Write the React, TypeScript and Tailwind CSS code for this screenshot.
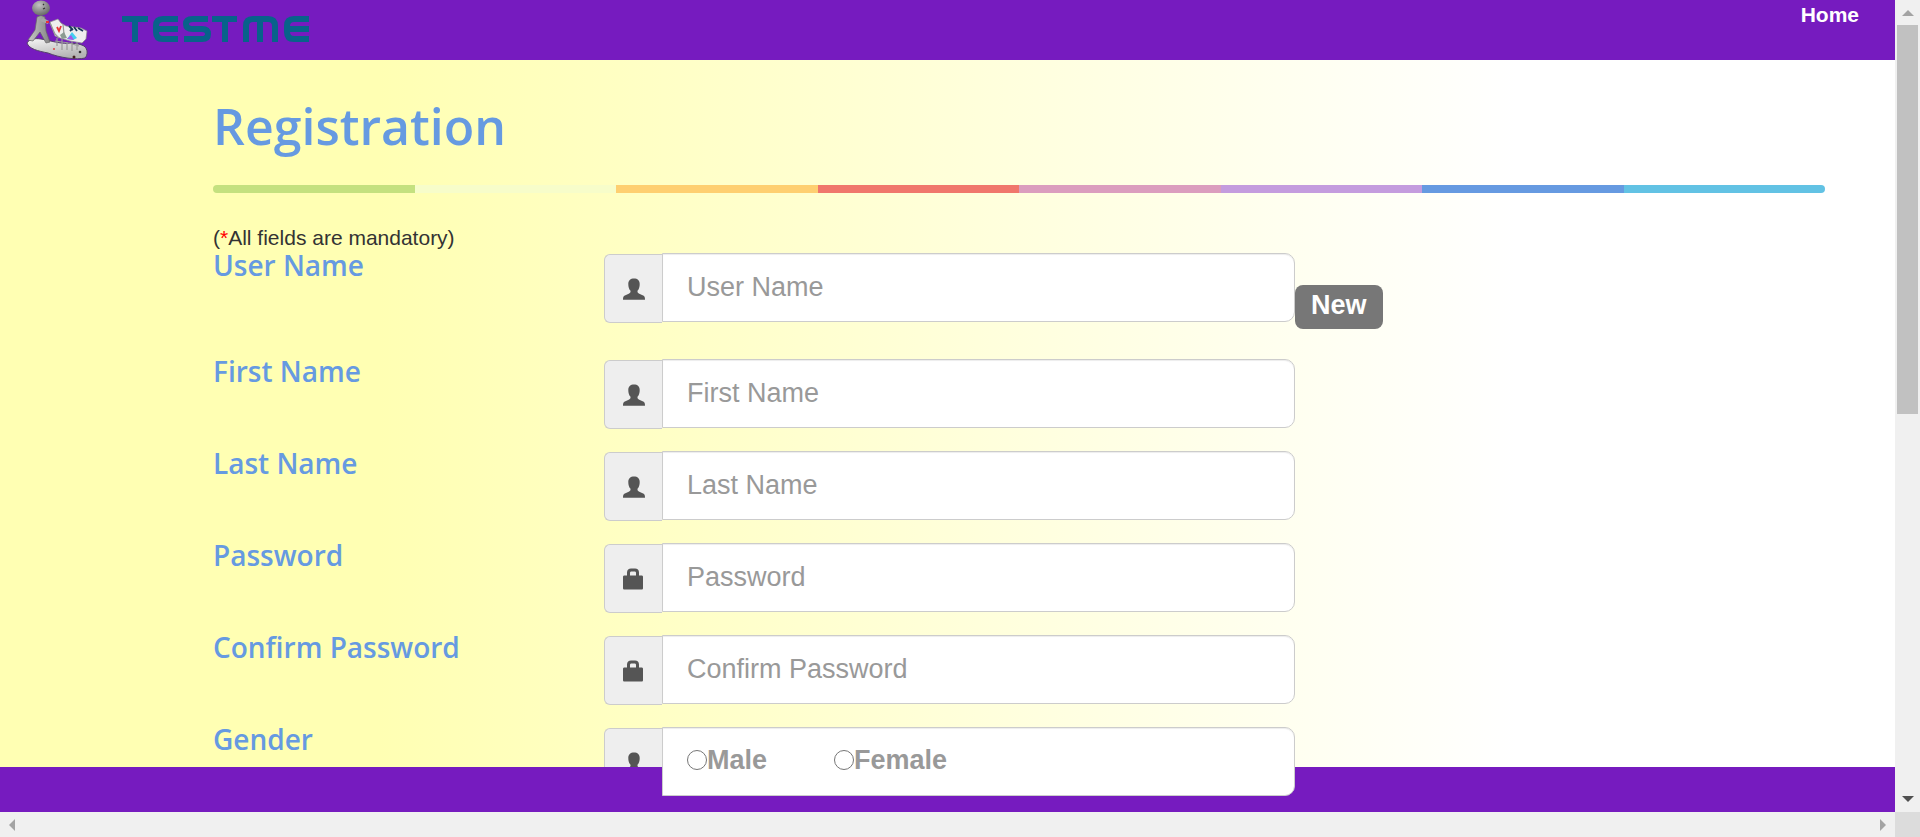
import type { ReactNode } from "react";

const stripes = ["bg-[#c4e17f]", "bg-[#f7fdca]", "bg-[#fecf71]", "bg-[#f0776c]", "bg-[#db9dbe]", "bg-[#c49cde]", "bg-[#669ae1]", "bg-[#62c2e4]"];

function UserIcon() {
  return (
    <svg width="22" height="22" viewBox="0 0 22 22" fill="#555" aria-hidden="true">
      <path d="M11 .5c3.600 0 5.700 2 5.700 5.500 0 3-.6 5-2.200 6.800v1c0 .8.6 1.300 1.800 1.900l3.800 1.700c1.500.7 1.900 1.600 1.900 4.300H0c0-2.700.4-3.600 1.900-4.300l3.800-1.700c1.200-.6 1.800-1.100 1.800-1.900v-1C5.900 11 5.300 9 5.300 6 5.300 2.500 7.400.5 11 .5Z" />
    </svg>
  );
}

function LockIcon() {
  return (
    <svg width="22" height="22" viewBox="0 0 22 22" fill="#555" aria-hidden="true">
      <path fillRule="evenodd" d="M4 7.500V4.500C4 2 5.800.5 8 .5h4c2.500 0 4 1.500 4 4v3h2.500c1 0 1.500.5 1.500 1.500v11c0 1-.5 1.500-1.500 1.500h-17C.5 21.500 0 21 0 20V9c0-1 .5-1.500 1.500-1.500H4Zm3 0h6V5c0-1-.5-1.500-1.500-1.500h-3C7.500 3.500 7 4 7 5v2.500Z" />
    </svg>
  );
}

function Logo() {
  return (
    <svg width="64" height="60" viewBox="0 0 64 60" aria-hidden="true">
      <defs>
        <radialGradient id="head" cx="0.4" cy="0.3" r="0.8"><stop offset="0" stopColor="#c4c4c4" /><stop offset="1" stopColor="#5c5c5c" /></radialGradient>
        <linearGradient id="body" x1="0" y1="0" x2="1" y2="0"><stop offset="0" stopColor="#c8c8c8" /><stop offset="1" stopColor="#858585" /></linearGradient>
        <linearGradient id="base" x1="0" y1="0" x2="0.4" y2="1"><stop offset="0" stopColor="#f6f6f6" /><stop offset="1" stopColor="#b4b4b4" /></linearGradient>
      </defs>
      <path d="M1 43C3 39 9 38 15 39c7 1 12 3 20 4 9 1 15-1 23 3 4 3 4 9 1 12-8 2-25 0-37-5C12 51 3 49 1 43Z" fill="url(#base)" stroke="#55406b" strokeWidth="1" />
      <path d="M11 17q4-3 8 0l1 14 4 11-4 1-6-11-7 9-5-1 7-10Z" fill="url(#body)" stroke="#666" strokeWidth="0.700" />
      <path d="m17 18 6 3-1 3-8-3Z" fill="#a6a6a6" />
      <ellipse cx="15" cy="8" rx="9" ry="7.500" fill="url(#head)" />
      <path d="m17 4 1 1m-1 4 2-1" stroke="#333" strokeWidth="1.200" />
      <path d="m24 22 8-3 3 4 5 3 15 2 6 3-1 8-4 4-12-2-10-3-5-2Z" fill="#eee" stroke="#888" strokeWidth="0.700" />
      <path d="m24 23 5 11 4 4M37 24l1 10m-7 4v8m5-8v12m5-8v8m5-9v10m5-9v8M29 41l14 2 10 3" stroke="#999" strokeWidth="1.200" fill="none" />
      <path d="m31 27 2 4 2-5M20 22h3" stroke="#e83434" strokeWidth="1.800" fill="none" />
      <path d="m43 26 4 4m1-3 3 4m1-3 5 3M44 31l2-2" stroke="#17365a" strokeWidth="1.800" />
      <path d="m34 35 4-3 3 6-5 1Z" fill="#8b9b92" />
      <path d="m41 39 5-7 5 6-4 2Z" fill="#42cef0" /><path d="m41 39 4-4 3 5Z" fill="#a957e6" />
      <circle cx="54" cy="52" r="1.300" fill="#333" /><circle cx="48" cy="57" r="1.500" fill="#422" /><circle cx="28" cy="49" r="1" fill="#d44" />
    </svg>
  );
}

function Wordmark() {
  return (
    <svg width="187" height="26" viewBox="0 0 187 26" fill="none" stroke="#08628a" strokeWidth="6" role="img" aria-label="TESTME">
      <path d="M0 3h26M13 3v23" />
      <path d="M56 3H41q-7 0-7 7v6q0 7 7 7h15M34 13h22" />
      <path d="M86 3H71q-7 0-7 5t7 5h9q6 0 6 5t-6 5H62" />
      <path d="M90 3h25M103 3v23" />
      <path d="M124 26V10q0-7 7-7h15q7 0 7 7v16M138 3v23" />
      <path d="M187 3h-15q-7 0-7 7v6q0 7 7 7h15M165 13h22" />
    </svg>
  );
}

type RowProps = { label: string; htmlFor?: string; icon: ReactNode; badge?: string; tall?: boolean; children: ReactNode };

function Row({ label, htmlFor, icon, badge, tall, children }: RowProps) {
  const labelClass = "text-[28px] leading-[24px] font-semibold text-[#669ae1] [font-family:'Trebuchet_MS','Open_Sans',sans-serif]";
  return (
    <div className={`grid grid-cols-[391fr_691fr_530fr] items-start ${tall ? "h-[106px]" : "h-[92px]"} shrink-0`}>
      {htmlFor ? <label htmlFor={htmlFor} className={labelClass}>{label}</label> : <span id="gender-label" className={labelClass}>{label}</span>}
      <div className="flex">
        <span className="mt-px flex h-[69px] w-[58px] shrink-0 items-center justify-center rounded-l-md border border-r-0 border-[#ccc] bg-[#eee]">{icon}</span>
        {children}
      </div>
      {badge && <span className="mt-8 justify-self-start rounded-lg bg-[#777] px-4 pt-1 pb-2 text-[27px] leading-[32px] font-bold text-white">{badge}</span>}
    </div>
  );
}

const fieldClass = "h-[69px] min-w-0 flex-1 rounded-r-[10px] border border-[#ccc] bg-white px-6 text-[27px] text-[#555] shadow-[inset_0_1px_1px_rgba(0,0,0,0.075)] outline-none placeholder:text-[#999]";

const radioClass = "size-5 appearance-none rounded-full border border-[#767676] bg-white checked:bg-[#767676]";

export default function App() {
  return (
    <div className="grid h-screen grid-cols-[1fr_25px] grid-rows-[1fr_25px] overflow-hidden bg-[#f0f0f0] [font-family:'Liberation_Sans',Arial,sans-serif]">
      <div className="relative flex min-h-0 flex-col overflow-hidden bg-[linear-gradient(to_right,#ffffb3_20%,#ffffff_80%)]">
        <header className="flex h-[60px] shrink-0 items-start justify-between bg-[#761bbf] pr-9 pl-[26px]">
          <div className="flex items-start">
            <Logo />
            <span className="mt-4 ml-8"><Wordmark /></span>
          </div>
          <a href="#" className="text-[21px] leading-[30px] font-bold text-white">Home</a>
        </header>
        <main className="flex min-h-0 flex-1 flex-col pr-[70px] pl-[213px]">
          <h1 className="mt-8 text-[50px] leading-[68px] font-semibold text-[#669ae1] [font-family:'Trebuchet_MS','Open_Sans',sans-serif]">Registration</h1>
          <div className="mt-[25px] flex h-2 shrink-0 overflow-hidden rounded-[5px]">
            {stripes.map((c) => <span key={c} className={`flex-1 ${c}`} />)}
          </div>
          <p className="mt-8 h-[28px] shrink-0 text-[21px] leading-[26px] text-[#333]">(<span className="text-[#f00]">*</span>All fields are mandatory)</p>
          <form className="flex flex-col">
            <Row label="User Name" htmlFor="user" icon={<UserIcon />} badge="New" tall><input id="user" placeholder="User Name" className={fieldClass} /></Row>
            <Row label="First Name" htmlFor="first" icon={<UserIcon />}><input id="first" placeholder="First Name" className={fieldClass} /></Row>
            <Row label="Last Name" htmlFor="last" icon={<UserIcon />}><input id="last" placeholder="Last Name" className={fieldClass} /></Row>
            <Row label="Password" htmlFor="pass" icon={<LockIcon />}><input id="pass" type="password" placeholder="Password" className={fieldClass} /></Row>
            <Row label="Confirm Password" htmlFor="confirm" icon={<LockIcon />}><input id="confirm" type="password" placeholder="Confirm Password" className={fieldClass} /></Row>
            <Row label="Gender" icon={<UserIcon />}>
              <div role="radiogroup" aria-labelledby="gender-label" className={`relative z-20 flex items-start gap-[67px] pt-3 leading-[40px] font-bold ${fieldClass}`}>
                <label className="flex items-center text-[#999]"><input type="radio" name="gender" className={radioClass} />Male</label>
                <label className="flex items-center text-[#999]"><input type="radio" name="gender" className={radioClass} />Female</label>
              </div>
            </Row>
          </form>
        </main>
        <footer className="absolute inset-x-0 bottom-0 z-10 h-[45px] bg-[#761bbf]" />
      </div>
      <div className="flex flex-col items-center">
        <svg width="25" height="25" viewBox="0 0 25 25" fill="#a3a3a3" aria-hidden="true"><path d="M7 16h12l-6-6Z" /></svg>
        <div className="h-[389px] w-[21px] bg-[#c1c1c1]" />
        <svg className="mt-auto" width="25" height="25" viewBox="0 0 25 25" fill="#505050" aria-hidden="true"><path d="M7 9h12l-6 6Z" /></svg>
      </div>
      <div className="flex items-center justify-between">
        <svg width="25" height="25" viewBox="0 0 25 25" fill="#a3a3a3" aria-hidden="true"><path d="M15 7v12l-6-6Z" /></svg>
        <svg width="25" height="25" viewBox="0 0 25 25" fill="#a3a3a3" aria-hidden="true"><path d="M10 7v12l6-6Z" /></svg>
      </div>
      <div className="bg-[#dcdcdc]" />
    </div>
  );
}
